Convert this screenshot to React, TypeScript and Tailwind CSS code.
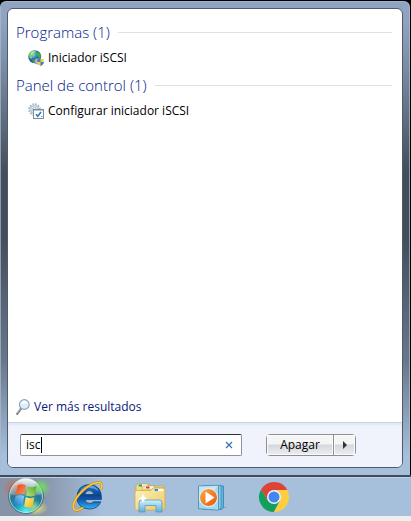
import { useState } from "react";
import type { ReactNode } from "react";

function GlobeIcon() {
  return (
    <svg aria-hidden="true" className="size-4 shrink-0" viewBox="0 0 16 16">
      <defs>
        <radialGradient id="globe" cx="35%" cy="30%" r="75%">
          <stop offset="0" stopColor="#a9dcf2" />
          <stop offset=".45" stopColor="#2e7fc4" />
          <stop offset="1" stopColor="#0b2f70" />
        </radialGradient>
      </defs>
      <circle cx="6.7" cy="6.7" r="6.5" fill="url(#globe)" />
      <path d="M1 4C2 1.500 4.500.300 6.500.400L8 2 6.500 3.500 7 5 4.500 6.500 3.500 9 1.500 7.500Z" fill="#7fd06a" />
      <path d="M8.500 3l2.500-.8 2 3-.5 3.300-2-1-1.500-2Z" fill="#49a942" />
      <path d="M4 10l3-1 1.500 2L7 13H5Z" fill="#3d9a55" />
      <path d="M2.500 3.500Q4.500 1 7 1.300 5 2.500 4 5Z" fill="#d9f5ea" opacity=".7" />
      <rect x="6.800" y="8.500" width="6" height="5.500" rx="2.500" fill="#b8bec6" stroke="#7c848e" strokeWidth=".7" />
      <path d="M12.500 8.500q1.700 1 3.300.8v2.600q0 2.600-3.300 4.100-3.300-1.500-3.300-4.100V9.300q1.700.2 3.300-.8Z" fill="#f3cf4a" />
      <path d="M12.500 8.500V12H9.200V9.300q1.700.2 3.300-.8ZM12.500 12h3.300q0 2.600-3.300 4Z" fill="#3b7fcb" />
    </svg>
  );
}

function GearPanelIcon() {
  return (
    <svg aria-hidden="true" className="size-4 shrink-0" viewBox="0 0 16 16">
      <circle cx="6.500" cy="6.500" r="5.300" fill="none" stroke="#a7b4c2" strokeWidth="2" strokeDasharray="1.700 1.070" />
      <circle cx="6.500" cy="6.500" r="4" fill="#dce8f1" stroke="#a3b3c3" strokeWidth=".9" />
      <circle cx="6.500" cy="6.500" r="1.800" fill="#fff" stroke="#9aabbd" strokeWidth=".8" />
      <rect x="5.500" y="6.500" width="10" height="9" fill="#fff" stroke="#7f8b98" />
      <path d="M6 7.500h9" stroke="#b9c8d6" />
      <path d="M8 11.200l1.700 2L13 9" fill="none" stroke="#2378c0" strokeWidth="1.500" />
      <path d="M13 13.500h1.500" stroke="#8fa0b0" />
    </svg>
  );
}

function MagnifierIcon() {
  return (
    <svg aria-hidden="true" className="h-4 w-3.5 shrink-0" viewBox="0 0 14 16">
      <path d="M4.800 9.800L1.200 14.800" stroke="#7d7f84" strokeWidth="2.200" strokeLinecap="round" />
      <path d="M4.300 9.800L1 14.400" stroke="#c4c7cc" strokeWidth=".8" />
      <circle cx="8.300" cy="5.500" r="4.900" fill="#dceefb" stroke="#8ca0b8" strokeWidth="1.100" />
      <path d="M4.800 5.300a3.500 3.500 0 0 1 7 0q-3.500-1.500-7 0Z" fill="#fff" />
    </svg>
  );
}

function WindowsOrb() {
  return (
    <svg aria-hidden="true" className="h-[39px] w-14" viewBox="0 0 56 39">
      <defs>
        <radialGradient id="orb" cx="50%" cy="94%" r="90%">
          <stop offset="0" stopColor="#5af2f5" />
          <stop offset=".3" stopColor="#16a5bd" />
          <stop offset=".62" stopColor="#28768e" />
          <stop offset="1" stopColor="#9fb7c5" />
        </radialGradient>
        <linearGradient id="orbShine" x1="0" y1="0" x2="0" y2="1">
          <stop offset="0" stopColor="#fff" stopOpacity=".8" />
          <stop offset="1" stopColor="#fff" stopOpacity=".15" />
        </linearGradient>
        <radialGradient id="glowRed">
          <stop offset="0" stopColor="#f4552c" stopOpacity=".7" />
          <stop offset="1" stopColor="#f4552c" stopOpacity="0" />
        </radialGradient>
        <radialGradient id="glowGreen">
          <stop offset="0" stopColor="#6ee45b" stopOpacity=".9" />
          <stop offset="1" stopColor="#6ee45b" stopOpacity="0" />
        </radialGradient>
        <radialGradient id="glowYellow">
          <stop offset="0" stopColor="#f5f06a" stopOpacity=".9" />
          <stop offset="1" stopColor="#f5f06a" stopOpacity="0" />
        </radialGradient>
        <linearGradient id="flagRed" x1="0" y1="0" x2="1" y2="1">
          <stop offset="0" stopColor="#e8421c" />
          <stop offset="1" stopColor="#fb9c54" />
        </linearGradient>
        <linearGradient id="flagGreen" x1="1" y1="0" x2="0" y2="1">
          <stop offset="0" stopColor="#4fa52b" />
          <stop offset="1" stopColor="#c4e077" />
        </linearGradient>
        <linearGradient id="flagBlue" x1="0" y1="1" x2="1" y2="0">
          <stop offset="0" stopColor="#1c6fc9" />
          <stop offset="1" stopColor="#8fd3f5" />
        </linearGradient>
        <linearGradient id="flagYellow" x1="0" y1="0" x2="1" y2="1">
          <stop offset="0" stopColor="#fff08a" />
          <stop offset="1" stopColor="#f3b10d" />
        </linearGradient>
      </defs>
      <ellipse cx="13" cy="12" rx="10" ry="11" fill="url(#glowRed)" />
      <ellipse cx="41" cy="11" rx="10" ry="10" fill="url(#glowGreen)" />
      <ellipse cx="36" cy="31" rx="12" ry="8" fill="url(#glowYellow)" />
      <circle cx="26" cy="19" r="17.500" fill="url(#orb)" stroke="#4d7183" />
      <circle cx="26" cy="19" r="16.500" fill="none" stroke="#d4f5f5" strokeOpacity=".65" />
      <path d="M10 17A16 16 0 0 1 42 17Q26 22 10 17Z" fill="url(#orbShine)" />
      <circle cx="18" cy="12" r="9" fill="url(#glowRed)" opacity=".7" />
      <circle cx="39" cy="11" r="7" fill="url(#glowGreen)" />
      <circle cx="34" cy="30" r="7" fill="url(#glowYellow)" opacity=".7" />
      <path d="M17.500 8.500Q21.500 6 26 8.300L24.500 17.500Q20 15.500 15.800 18Z" fill="url(#flagRed)" />
      <path d="M27.500 9.300Q31.500 11.500 36.500 9L34.700 18.500Q30.500 20.500 26 18.300Z" fill="url(#flagGreen)" />
      <path d="M15.400 19.600Q20 17.200 24.200 19.300L22.600 28.300Q18.500 26.300 13.800 28.800Z" fill="url(#flagBlue)" />
      <path d="M25.700 20Q30 22.200 34.300 20.200L32.500 29.600Q28.500 31.500 24.200 29.200Z" fill="url(#flagYellow)" />
    </svg>
  );
}

function ExplorerEIcon() {
  return (
    <svg aria-hidden="true" className="h-8 w-8" viewBox="0 0 32 32">
      <defs>
        <linearGradient id="ieBlue" x1="0" y1="0" x2="0" y2="1">
          <stop offset="0" stopColor="#2878c8" />
          <stop offset=".45" stopColor="#0b438f" />
          <stop offset=".65" stopColor="#0d60b5" />
          <stop offset="1" stopColor="#35b5f2" />
        </linearGradient>
      </defs>
      <path
        d="M29.500 18.500H13Q13.500 22.500 17.500 22.500 20.500 22.500 21.500 20.800H28.800Q26 28 17.200 28 5 27.500 5 16 5.500 4 17.200 3.500 30 4 29.500 18.500ZM13 13.500H21.700Q21.200 9.500 17.300 9.500T13 13.500Z"
        fill="url(#ieBlue)"
        stroke="#104584"
        strokeWidth=".8"
        fillRule="evenodd"
      />
      <path d="M7 12Q10 5 17 4.500 24 4.500 26.500 10 22 6.500 17 7 11 7.200 7 12Z" fill="#7fbcf0" opacity=".7" />
      <path
        d="M28.800 8.500Q32 2 26.500 1.500 20 1.500 11.500 9 3.500 16.500 1.600 23 .300 29.500 5 29.200 8 29 11 26.500"
        fill="none"
        stroke="#bd7c13"
        strokeWidth="2.400"
      />
      <path
        d="M28.800 8.500Q32 2 26.500 1.500 20 1.500 11.500 9 3.500 16.500 1.600 23 .300 29.500 5 29.200 8 29 11 26.500"
        fill="none"
        stroke="#fbd337"
        strokeWidth="1.600"
      />
    </svg>
  );
}

function FolderIcon() {
  return (
    <svg aria-hidden="true" className="h-8 w-8" viewBox="0 0 32 32">
      <defs>
        <linearGradient id="folder" x1="0" y1="0" x2="1" y2="1">
          <stop offset="0" stopColor="#fcf2b8" />
          <stop offset="1" stopColor="#ecc96a" />
        </linearGradient>
        <linearGradient id="stand" x1="0" y1="0" x2="0" y2="1">
          <stop offset="0" stopColor="#d2f1fb" />
          <stop offset="1" stopColor="#60add8" />
        </linearGradient>
      </defs>
      <path d="M2 28V5l1-2h11l1 2h15v23Z" fill="#f4dc8b" stroke="#c9a54b" strokeWidth=".8" />
      <path d="M4 3.500h9v2H4Z" fill="#fff" />
      <path d="M4.500 3.500H8v2H4.500Z" fill="#18a43b" />
      <path d="M8 8V6l1-1h11l1 1.500h9V9H8Z" fill="#f7e39c" stroke="#cfaa51" strokeWidth=".7" />
      <path d="M11 5.500h8v2h-8Z" fill="#fff" />
      <path d="M12 5.500h3.500v2H12Z" fill="#d83a23" />
      <path d="M1 11q0-1.500 1.500-1.500H17L19 7h10q2 0 2 2v18.500q0 1.500-1.500 1.500h-27Q1 29 1 27.500Z" fill="url(#folder)" stroke="#d0ac4f" strokeWidth=".8" />
      <path d="M20 8h9v2h-9Z" fill="#fff" />
      <path d="M20.500 8H24v2h-3.500Z" fill="#2392df" />
      <path d="M5 31V22q0-3 3-3h17q3 0 3 3v9h-6v-6.500H11V31Z" fill="url(#stand)" stroke="#559cc2" strokeWidth=".8" />
      <path d="M9 12q.4 5 5 5.300Q9.400 17.700 9 23 8.600 17.700 4 17.300 8.600 17 9 12Z" fill="#fff" />
    </svg>
  );
}

function MediaPlayerIcon() {
  return (
    <svg aria-hidden="true" className="h-8 w-8" viewBox="0 0 32 32">
      <defs>
        <linearGradient id="play" x1="0" y1="0" x2="1" y2="1">
          <stop offset="0" stopColor="#ffae45" />
          <stop offset="1" stopColor="#e55306" />
        </linearGradient>
      </defs>
      <path d="M26 25.500l5 .5-7 3Z" fill="#7b92a8" opacity=".6" />
      <path d="M10 5h17.500v21l-2 2.500H10Z" fill="#65b4d9" stroke="#3384b0" strokeWidth=".8" />
      <path d="M7 4.500h18V27l-2 1.500H7Z" fill="#8fcbe8" stroke="#3a8cb7" strokeWidth=".8" />
      <path d="M2.500 5l20-.7v24.900l-20-1.500Z" fill="#a7d8ef" stroke="#4b9ac2" />
      <path d="M3 5.500l19-.7-8 11L3 20Z" fill="#d5effa" opacity=".6" />
      <circle cx="12.500" cy="16.500" r="9" fill="url(#play)" stroke="#e8f4fb" />
      <path d="M9.500 10.500L18.500 16.500l-9 6Z" fill="#fff" />
    </svg>
  );
}

function ChromeIcon() {
  return (
    <svg aria-hidden="true" className="h-8 w-8" viewBox="0 0 32 32">
      <path d="M3 8.500A15 15 0 0 0 16 31L22.100 19.500 16 16 9.900 19.500Z" fill="#12a05c" />
      <path d="M29 8.500A15 15 0 0 1 16 31L22.100 19.500 16 9V8.500Z" fill="#ffcd40" />
      <path d="M16 9H29.300A15 15 0 0 0 3 8.500L9.900 19.500 12 12Z" fill="#db4437" />
      <circle cx="16" cy="16" r="7" fill="#f1f1f1" />
      <circle cx="16" cy="16" r="5.500" fill="#4285f4" />
    </svg>
  );
}

function ResultGroup({ title, item, icon }: { title: string; item: string; icon: ReactNode }) {
  return (
    <section>
      <h2 className="flex h-6 items-center gap-2 text-[15px] leading-5 font-light text-[#00188a]">
        {title}
        <span className="h-px flex-1 bg-[#e0e0e0]" />
      </h2>
      <a href="#resultado" className="mb-0.5 flex h-[27px] items-center gap-1 pl-3 text-xs text-black">
        {icon}
        {item}
      </a>
    </section>
  );
}

const pinned = [
  { name: "Internet Explorer", icon: <ExplorerEIcon /> },
  { name: "Explorador de Windows", icon: <FolderIcon /> },
  { name: "Reproductor de Windows Media", icon: <MediaPlayerIcon /> },
  { name: "Google Chrome", icon: <ChromeIcon /> },
];

export default function App() {
  const [query, setQuery] = useState("isc");

  return (
    <div className="flex min-h-screen flex-col bg-black font-['Open_Sans','Noto_Sans',sans-serif]">
      <main className="mt-px mr-px flex flex-1 flex-col rounded-t-md border border-[#a9bbd2]/70 bg-[linear-gradient(#90a4c1_4%,#7f92ab_12%,#434e5b_36%,#434e5b_50%,#68788c_76%,#a6bfdb_96%)] bg-origin-border p-1.5">
        <div className="flex flex-1 flex-col overflow-hidden rounded-md border border-[#505b69] bg-white">
          <div className="flex flex-1 flex-col pt-[11px] pr-2.5 pl-2">
            <ResultGroup title="Programas (1)" item="Iniciador iSCSI" icon={<GlobeIcon />} />
            <ResultGroup title="Panel de control (1)" item="Configurar iniciador iSCSI" icon={<GearPanelIcon />} />
            <a href="#mas" className="mt-auto mb-[7px] flex h-4 items-center gap-1 text-xs text-[#0a1a7a]">
              <MagnifierIcon />
              Ver más resultados
            </a>
          </div>
          <footer className="flex h-[45px] shrink-0 items-center border-t border-[#c5d6ea] bg-[#f0f3fb] pr-[46px] pl-3 shadow-[inset_0_2px_2px_#dfe8f4]">
            <div className="flex h-[22px] min-w-0 flex-1 items-center rounded-xs border border-[#8e9399] border-t-[#303236] bg-white pr-2 pl-[5px]">
              <input
                type="text"
                aria-label="Buscar programas y archivos"
                autoComplete="off"
                value={query}
                onChange={(e) => setQuery(e.target.value)}
                className="field-sizing-content max-w-40 text-xs outline-none"
              />
              <span className="h-4 w-px bg-black" />
              <button type="button" aria-label="Borrar" onClick={() => setQuery("")} className="ml-auto text-[#3d75a8]">
                <svg aria-hidden="true" className="size-2" viewBox="0 0 8 8">
                  <path d="M1 1l6 6M7 1L1 7" stroke="currentColor" strokeWidth="1.300" />
                </svg>
              </button>
            </div>
            <div className="ml-6 flex h-[22px] rounded-sm border border-[#8b8f96] bg-linear-to-b from-[#f5f5f6] from-45% via-[#d5d7dc] via-50% to-[#eceef1] text-xs text-black">
              <button type="button" className="w-[67px] border-r border-[#8b8f96] shadow-[inset_0_0_0_1px_#fafafa]">Apagar</button>
              <button type="button" aria-label="Más opciones de apagado" className="flex w-[21px] items-center justify-center shadow-[inset_0_0_0_1px_#fafafa]">
                <svg aria-hidden="true" className="h-2 w-1" viewBox="0 0 4 8">
                  <path d="M0 0l4 4-4 4Z" fill="#303236" />
                </svg>
              </button>
            </div>
          </footer>
        </div>
      </main>
      <nav aria-label="Barra de tareas" className="flex h-[41px] shrink-0 items-center border-t-2 border-[#404c5c] bg-linear-to-r from-[#8794a8] from-10% via-[#a6bfdb] via-25% to-[#a6bfdb] shadow-[inset_0_1px_0_#bccfe2]">
        <button type="button" aria-label="Inicio" className="w-14">
          <WindowsOrb />
        </button>
        <div className="flex gap-[30px] pl-4">
          {pinned.map((app) => (
            <button key={app.name} type="button" aria-label={app.name}>
              {app.icon}
            </button>
          ))}
        </div>
      </nav>
      <div className="h-[5px] shrink-0 bg-[#eeeeee]" />
    </div>
  );
}
